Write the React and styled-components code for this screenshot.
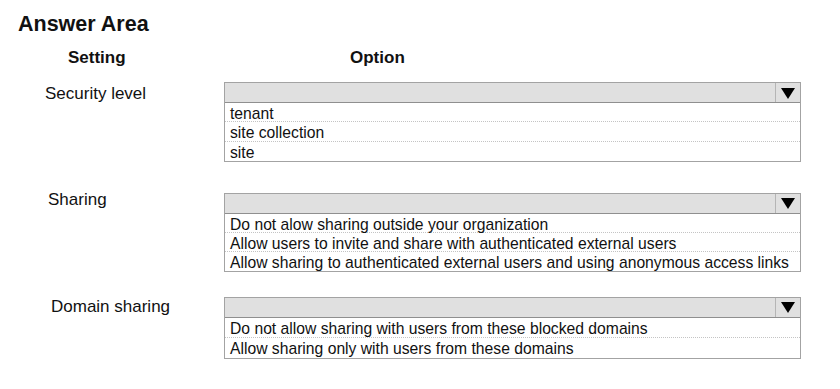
import React from "react";
import styled, { createGlobalStyle } from "styled-components";

const GlobalStyle = createGlobalStyle`
  body {
    margin: 0;
    background: #ffffff;
    font-family: "Liberation Sans", Arial, sans-serif;
    color: #111;
  }
`;

const sections = [
  {
    label: "Security level",
    indent: 45,
    labelTop: 2,
    top: 14,
    rowHeight: 19.3,
    options: ["tenant", "site collection", "site"]
  },
  {
    label: "Sharing",
    indent: 48,
    labelTop: -3,
    top: 31,
    rowHeight: 19,
    options: [
      "Do not alow sharing outside your organization",
      "Allow users to invite and share with authenticated external users",
      "Allow sharing to authenticated external users and using anonymous access links"
    ]
  },
  {
    label: "Domain sharing",
    indent: 51,
    labelTop: 0,
    top: 25,
    rowHeight: 20,
    options: [
      "Do not allow sharing with users from these blocked domains",
      "Allow sharing only with users from these domains"
    ]
  }
];

class App extends React.Component {
  renderOptions = (section) => {
    return section.options.map((text, i) => {
      return (
        <OptionRow key={i} h={section.rowHeight} last={i === section.options.length - 1}>
          {text}
        </OptionRow>
      );
    });
  };

  renderSections = () => {
    return sections.map((section, i) => {
      return (
        <Row key={i} top={section.top}>
          <Label indent={section.indent} offset={section.labelTop}>
            {section.label}
          </Label>
          <Dropdown>
            <Select>
              <Arrow>
                <svg width="14" height="11" viewBox="0 0 14 11">
                  <polygon points="0,0 14,0 7,11" fill="#000" />
                </svg>
              </Arrow>
            </Select>
            <List>{this.renderOptions(section)}</List>
          </Dropdown>
        </Row>
      );
    });
  };

  render() {
    return (
      <Container>
        <GlobalStyle />
        <Title>Answer Area</Title>
        <HeaderRow>
          <ColumnHead indent={68}>Setting</ColumnHead>
          <ColumnHead indent={126}>Option</ColumnHead>
        </HeaderRow>
        {this.renderSections()}
      </Container>
    );
  }
}

const Container = styled.div`
  width: 840px;
  height: 389px;
  padding-top: 12px;
  box-sizing: border-box;
  overflow: hidden;
`;

const Title = styled.h1`
  margin: 0 0 0 18px;
  font-size: 21.5px;
  line-height: 24px;
  font-weight: bold;
`;

const HeaderRow = styled.div`
  display: grid;
  grid-template-columns: 224px 577px;
  margin-top: 12px;
`;

const ColumnHead = styled.div`
  padding-left: ${(p) => p.indent}px;
  font-size: 17px;
  line-height: 20px;
  font-weight: bold;
`;

const Row = styled.div`
  display: grid;
  grid-template-columns: 224px 577px;
  align-items: start;
  margin-top: ${(p) => p.top}px;
`;

const Label = styled.div`
  padding-left: ${(p) => p.indent}px;
  margin-top: ${(p) => p.offset}px;
  font-size: 17px;
  line-height: 20px;
`;

const Dropdown = styled.div`
  border: 1px solid #a3a3a3;
  display: flex;
  flex-direction: column;
`;

const Select = styled.div`
  height: 19px;
  background: #e0e0e0;
  border-bottom: 1px solid #8f8f8f;
  display: flex;
  justify-content: flex-end;
`;

const Arrow = styled.div`
  width: 24px;
  border-left: 1px solid #b5b5b5;
  display: flex;
  align-items: center;
  justify-content: center;
  padding-top: 1px;
`;

const List = styled.div`
  display: flex;
  flex-direction: column;
  background: #fff;
`;

const OptionRow = styled.div`
  height: ${(p) => p.h}px;
  box-sizing: border-box;
  padding: 2px 0 0 5px;
  font-size: 15.7px;
  line-height: 17px;
  white-space: nowrap;
  border-bottom: ${(p) => (p.last ? "none" : "1px dotted #c4c4c4")};
`;

export default App;
